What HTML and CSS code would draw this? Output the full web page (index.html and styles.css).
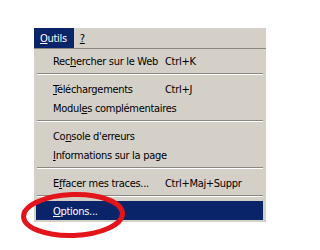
FILE: index.html
```html
<!DOCTYPE html>
<html lang="fr">
<head>
<meta charset="utf-8">
<title>Outils</title>
<link rel="stylesheet" href="styles.css">
</head>
<body>
<div class="stage">
  <div class="window">
    <div class="menubar">
      <span class="top-item active"><u>O</u>utils</span>
      <span class="top-item"><u>?</u></span>
    </div>
    <div class="dropdown">
      <div class="item"><span class="label">Rec<u>h</u>ercher sur le Web</span><span class="key">Ctrl+K</span></div>
      <div class="sep"></div>
      <div class="item"><span class="label"><u>T</u>éléchargements</span><span class="key">Ctrl+J</span></div>
      <div class="item"><span class="label">Modul<u>e</u>s complémentaires</span><span class="key"></span></div>
      <div class="sep"></div>
      <div class="item"><span class="label">Co<u>n</u>sole d'erreurs</span><span class="key"></span></div>
      <div class="item"><span class="label"><u>I</u>nformations sur la page</span><span class="key"></span></div>
      <div class="sep"></div>
      <div class="item"><span class="label">E<u>f</u>facer mes traces...</span><span class="key">Ctrl+Maj+Suppr</span></div>
      <div class="sep"></div>
      <div class="item selected"><span class="label"><u>O</u>ptions...</span><span class="key"></span></div>
    </div>
  </div>
  <svg class="circle" width="300" height="250" viewBox="0 0 300 250" aria-hidden="true">
    <ellipse cx="73" cy="215" rx="49.5" ry="20.5" fill="none" stroke="#e3151b" stroke-width="5" transform="rotate(-2 73 215)"/>
  </svg>
</div>
</body>
</html>
```
FILE: styles.css
```css
html, body {
  margin: 0;
  padding: 0;
  background: #ffffff;
}
.stage {
  position: relative;
  width: 300px;
  height: 250px;
  overflow: hidden;
  padding-top: 28px;
  padding-left: 34px;
  box-sizing: border-box;
  font-family: "DejaVu Sans Condensed", "DejaVu Sans", sans-serif;
  font-size: 11px;
  letter-spacing: -0.3px;
  color: #000;
}
.window {
  width: 232px;
  background: #d4d0c8;
  padding-bottom: 2px;
}
u {
  text-decoration: underline;
  text-underline-offset: 1px;
}
.menubar {
  display: flex;
  height: 20px;
  border-bottom: 1px solid #8a8780;
  margin-bottom: 2px;
}
.top-item {
  display: flex;
  align-items: center;
  padding: 2px 6px 0;
  line-height: 18px;
}
.top-item.active {
  background: #0a246a;
  color: #fff;
  padding: 2px 7px 0 6px;
}
.dropdown {
  display: flex;
  flex-direction: column;
  padding: 0 3px 0 2px;
}
.item {
  display: grid;
  grid-template-columns: 112px auto;
  height: 19px;
  line-height: 22px;
  padding-left: 17px;
  white-space: nowrap;
}
.item.selected {
  background: #0a246a;
  color: #fff;
}
.sep {
  height: 9px;
  margin-left: 1px;
  box-sizing: border-box;
  padding-top: 3px;
}
.sep::before {
  content: "";
  display: block;
  height: 1px;
  background: #8a8780;
  border-bottom: 1px solid #ffffff;
}
.circle {
  position: absolute;
  left: 0;
  top: 0;
}
```
